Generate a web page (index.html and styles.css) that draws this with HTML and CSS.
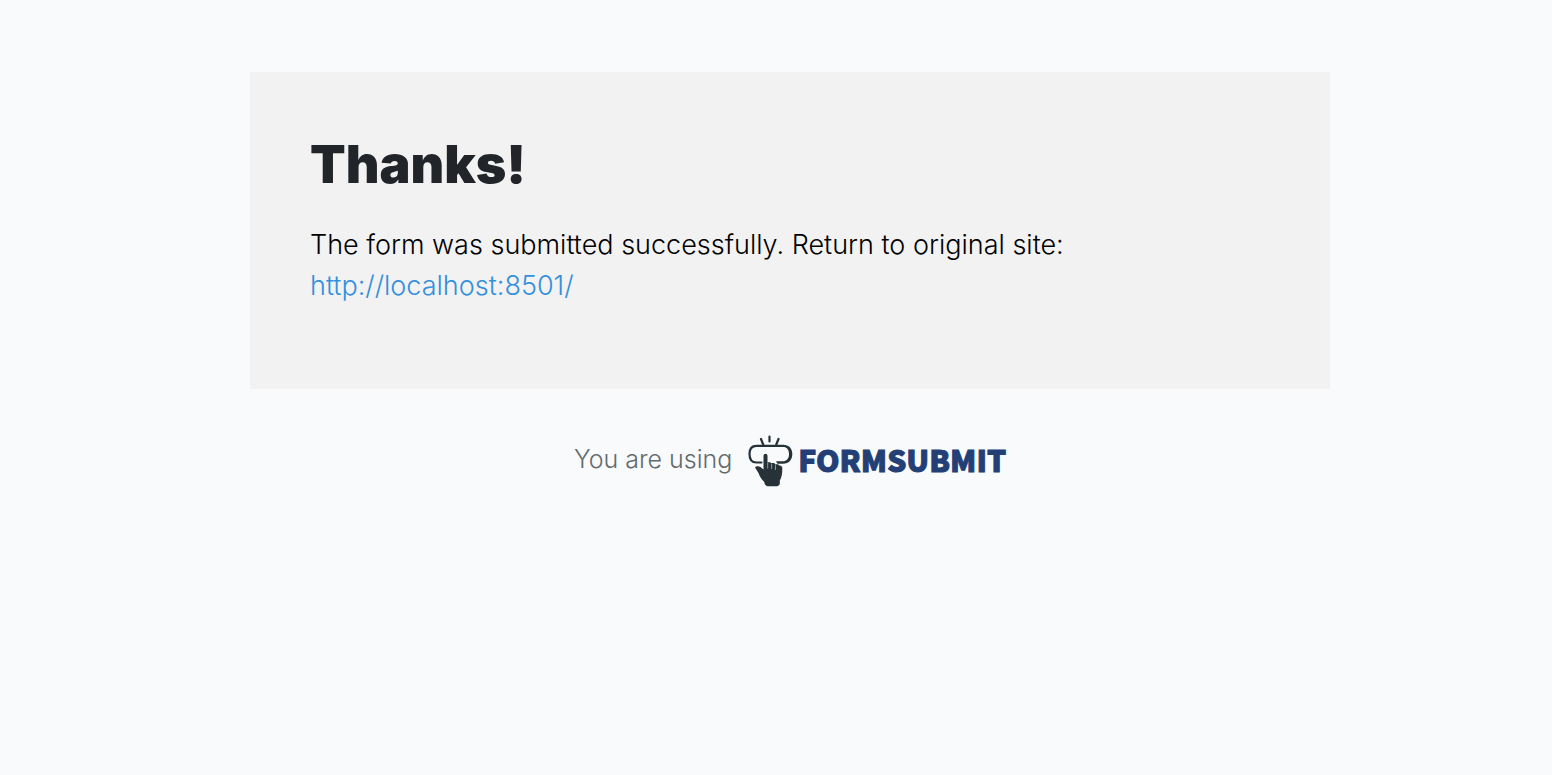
FILE: index.html
```html
<!DOCTYPE html>
<html lang="en">
<head>
<meta charset="utf-8">
<meta name="viewport" content="width=device-width, initial-scale=1">
<title>Thanks!</title>
<link rel="stylesheet" href="styles.css">
</head>
<body>
<main class="page">
  <section class="card">
    <h1 class="card-title">Thanks!</h1>
    <p class="card-text">The form was submitted successfully. Return to original site: <a class="card-link" href="http://localhost:8501/">http://localhost:8501/</a></p>
  </section>
  <footer class="credit">
    <span class="credit-text">You are using</span>
    <a class="brand" href="#">
      <svg class="brand-icon" viewBox="0 0 46 54" aria-hidden="true">
        <g fill="none" stroke="#263238" stroke-linecap="round" stroke-width="2.200">
          <path d="M13 5l2.200 5.500M21.500 2.500v5M30.500 5l-2.200 5.500"/>
          <path d="M13.500 28.500H8.500C3.500 28.500 1.500 25.500 1.500 20S3.500 11.800 8.500 11.800H35"/>
        </g>
        <path fill="#263238" d="M35 10.700c6 0 9.300 3.600 9.300 9.400s-3.300 9.700-9.300 9.700h-5.500l-1.500-2.500h6c4.500 0 7-2.500 7-7.100s-2-7.300-6-7.300z"/>
        <path fill="#263238" d="M15.500 35.500V22c0-3 4-3 4 0v6.500c1.200-.4 3.300-.3 3.900.7 1.500-.5 3.500-.1 4 1.100 1.600-.4 3.500 0 4 1.100 1.700-.1 2.900.8 2.900 2.900 0 5-.4 8.700-2.500 12.400v2.800c0 1.400-1.400 2.700-2.800 2.700H19.800c-1.400 0-2.900-1.300-3.200-2.700l-.3-1.500c-2.300-2-4.400-5-5.800-9L7 33.500c1-1.700 3.700-1.700 5.500-.5z"/>
        <path fill="none" stroke="#8b949a" stroke-width="1" d="M19.700 28.500v6M23.600 29.500v5.500M27.500 30.500v5.500"/>
      </svg>
      <span class="brand-name">FORMSUBMIT</span>
    </a>
  </footer>
</main>
</body>
</html>
```
FILE: styles.css
```css
* {
  box-sizing: border-box;
}

body {
  margin: 0;
  background: #f8fafc;
  color: #000;
  font-family: Inter, "Liberation Sans", sans-serif;
}

.page {
  max-width: 1108px;
  margin: 0 auto;
  padding: 72px 0 40px 28px;
}

.card {
  padding: 61px 60px 83px;
  background: #f2f2f2;
}

.card-title {
  margin: 0 0 27px;
  color: #212529;
  font-size: 52px;
  font-weight: 900;
  line-height: 64px;
}

.card-text {
  margin: 0;
  font-size: 27px;
  font-weight: 350;
  line-height: 41px;
}

.card-link {
  display: block;
  width: fit-content;
  color: #3490dc;
  text-decoration: none;
}

.credit {
  display: flex;
  justify-content: center;
  align-items: center;
  gap: 16px;
  padding-top: 45px;
}

.credit-text {
  padding-bottom: 4px;
  color: #636b6f;
  font-size: 25px;
  font-weight: 300;
  line-height: 48px;
}

.brand {
  display: flex;
  align-items: center;
  gap: 4px;
  color: #243f75;
  text-decoration: none;
}

.brand-icon {
  width: 46px;
  height: 54px;
}

.brand-name {
  padding-bottom: 4px;
  font-family: "Noto Sans CJK JP", "Open Sans", sans-serif;
  font-size: 30px;
  font-weight: 900;
  line-height: 48px;
  -webkit-text-stroke: 1px currentColor;
}
```
